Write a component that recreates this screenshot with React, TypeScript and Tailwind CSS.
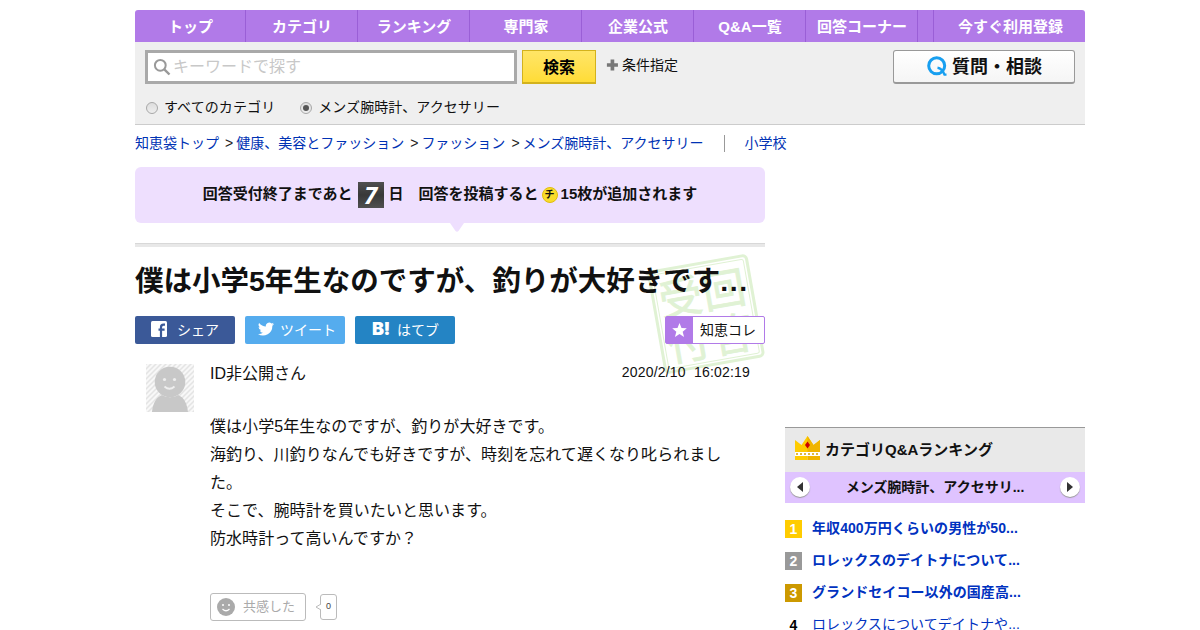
import React from "react";

const navItems = ["トップ", "カテゴリ", "ランキング", "専門家", "企業公式", "Q&A一覧", "回答コーナー"];

const crumbs = ["知恵袋トップ", "健康、美容とファッション", "ファッション", "メンズ腕時計、アクセサリー"];

const ranking = [
  { n: 1, title: "年収400万円くらいの男性が50...", badge: "bg-[#fc0] text-white", text: "font-bold" },
  { n: 2, title: "ロレックスのデイトナについて...", badge: "bg-[#999] text-white", text: "font-bold" },
  { n: 3, title: "グランドセイコー以外の国産高...", badge: "bg-[#c90] text-white", text: "font-bold" },
  { n: 4, title: "ロレックスについてデイトナや...", badge: "text-black", text: "" },
];

function Header() {
  return (
    <header>
      <nav className="flex h-8 rounded-t-[3px] bg-[#b17ae8] text-[15px] leading-[33px] font-bold text-white">
        {navItems.map((t, i) => (
          <div key={t} className={`${i === 0 ? "w-[111px]" : "w-28"} border-r border-[#9a5fd6] pl-px text-center`}>
            {t}
          </div>
        ))}
        <div className="w-[16px] border-r border-[#9a5fd6]" />
        <div className="flex-1 pl-[2px] text-center">今すぐ利用登録</div>
      </nav>
      <div className="h-[83px] border-b border-[#ccc] bg-[#efefef] px-[10px] pt-2">
        <div className="flex">
          <div className="flex h-[34px] w-[372px] items-center border-3 border-[#a9a9a9] bg-white pl-[5px] text-base leading-none text-[#c8c8c8]">
            <svg width="18" height="18" viewBox="0 0 18 18" fill="none" stroke="#999" className="mr-[2px]">
              <circle cx="7.3" cy="7.3" r="5.4" strokeWidth="2" />
              <path d="M11.3 11.3L16.5 16.5" strokeWidth="2.4" />
            </svg>
            キーワードで探す
          </div>
          <div className="ml-[5px] h-[34px] w-[74px] border border-b-2 border-[#d3b21c] bg-linear-to-b from-[#ffe566] to-[#ffdc35] text-center text-base leading-[33px] font-bold text-black">
            検索
          </div>
          <div className="ml-[10px] flex h-[30px] items-center text-sm">
            <svg width="12" height="12" viewBox="0 0 12 12" className="mr-[4px]">
              <path d="M4 0h4v4h4v4H8v4H4V8H0V4h4z" fill="#777" transform="translate(.9 .5) scale(.92)" />
            </svg>
            条件指定
          </div>
          <div className="ml-auto flex h-[34px] w-[182px] items-center justify-center rounded-[3px] border border-b-2 border-[#999] bg-linear-to-b from-white to-[#f5f5f5] pl-px text-lg leading-none font-bold">
            <svg width="20" height="20" viewBox="0 0 20 20" fill="none" stroke="#189ff0" className="mr-[5px] -mt-px">
              <circle cx="9.7" cy="9.8" r="8" strokeWidth="3" />
              <path d="M10.5 11.8C14 12.3 16 15 17.500 18.6H19.500" strokeWidth="2.4" />
            </svg>
            質問・相談
          </div>
        </div>
        <div className="mt-[13px] flex text-sm leading-5">
          <div className="flex items-center">
            <Radio />
            <span className="tracking-[0.1px]">すべてのカテゴリ</span>
          </div>
          <div className="ml-6 flex items-center">
            <Radio checked />
            <span className="tracking-[0.05px]">メンズ腕時計、アクセサリー</span>
          </div>
        </div>
      </div>
    </header>
  );
}

function Radio({ checked = false }: { checked?: boolean }) {
  return (
    <span className="mt-px mr-[6px] ml-px flex size-3 items-center justify-center rounded-full border border-[#a8a8a8] bg-linear-to-b from-[#ddd] to-[#eee]">
      {checked && <span className="size-1.5 rounded-full bg-[#555]" />}
    </span>
  );
}

function Breadcrumbs() {
  return (
    <div className="flex h-[42px] items-start pt-2 text-sm leading-5 text-[#0032b4]">
      {crumbs.map((c, i) => (
        <React.Fragment key={c}>
          {i > 0 && <span className="mr-[3px] ml-[6px] text-[#222]">&gt;</span>}
          <span>{c}</span>
        </React.Fragment>
      ))}
      <span className="mt-[2px] ml-5 h-[17px] w-px bg-[#999]" />
      <span className="ml-5">小学校</span>
    </div>
  );
}

function Banner() {
  return (
    <div className="relative flex h-14 items-center justify-center rounded-md bg-[#eedffe] text-[15px] leading-none font-bold whitespace-nowrap">
      <span className="-mt-[3px]">回答受付終了まであと</span>
      <span className="mr-[5px] ml-[5px] flex h-[26px] w-[26px] items-center justify-center bg-linear-to-b from-[#505050] via-[#383838] via-50% to-[#505050] font-['Noto_Sans'] text-[24px] text-white italic">
        7
      </span>
      <span className="-mt-[3px]">日　回答を投稿すると</span>
      <span className="mr-[3px] ml-[3px] flex size-4 items-center justify-center rounded-full border border-[#e0bd10] bg-[#f9dc2c] text-[10px]">
        チ
      </span>
      <span className="-mt-[3px]">15枚が追加されます</span>
      <svg width="14" height="9" className="absolute top-14 left-[315px]">
        <path d="M0 0H14L8.5 8Q7 9.5 5.5 8Z" fill="#eedffe" />
      </svg>
    </div>
  );
}

function Stamp() {
  return (
    <svg width="130" height="130" viewBox="0 0 130 130" className="absolute -top-[67px] -right-[6px] -z-10" fill="none" stroke="#e0f2d4">
      <g transform="translate(65 65) rotate(-10)">
        <rect x="-49.500" y="-51" width="99" height="102" rx="4" strokeWidth="3" />
        <rect x="-46" y="-47.500" width="92" height="95" rx="2" strokeWidth="1" />
        <g strokeWidth="0.800" fill="#e0f2d4" fontSize="43" textAnchor="middle">
          <text x="-22" y="-5">受</text>
          <text x="22" y="-5">回</text>
          <text x="-22" y="41">付</text>
          <text x="22" y="41">答</text>
        </g>
      </g>
    </svg>
  );
}

function ShareRow() {
  return (
    <div className="flex h-7 gap-[10px] text-sm leading-7 text-white">
      <div className="flex w-[100px] items-center rounded-xs bg-[#3b5998] pl-4">
        <svg width="16" height="16" viewBox="0 0 16 16" className="mr-[10px] -mt-[2px]">
          <rect width="16" height="16" rx="1.500" fill="#fff" />
          <path d="M10 16V6.300C10 4.500 10.800 3.700 12.500 3.700H14M7.500 8.700H13.600" fill="none" stroke="#3b5998" strokeWidth="2.200" />
        </svg>
        シェア
      </div>
      <div className="flex w-[100px] items-center rounded-xs bg-[#55acee] pl-[13px]">
        <svg width="16" height="16" viewBox="0 0 24 24" fill="#fff" className="mr-[6px] -mt-[3px]">
          <path d="M24 4.600a10 10 0 0 1-2.800.8 5 5 0 0 0 2.200-2.700 10 10 0 0 1-3.100 1.200 4.900 4.900 0 0 0-8.400 4.500A14 14 0 0 1 1.700 3.100a4.900 4.900 0 0 0 1.500 6.600 4.900 4.900 0 0 1-2.200-.6 4.900 4.900 0 0 0 3.900 4.900 5 5 0 0 1-2.200.1 4.900 4.900 0 0 0 4.600 3.400A10 10 0 0 1 0 19.500a14 14 0 0 0 21.500-12.400A10 10 0 0 0 24 4.600z" />
        </svg>
        ツイート
      </div>
      <div className="flex w-[100px] items-center rounded-xs bg-[#2484c4] pl-[17px]">
        <span className="mr-[7px] w-[18px] pb-[2px] font-['Inter'] text-[18px] leading-none font-black tracking-[-0.5px]">B!</span>
        はてブ
      </div>
      <div className="ml-auto flex w-[100px] rounded-xs border border-[#b17ae8] bg-white leading-[26px] text-[#111]">
        <span className="flex w-[27px] items-center justify-center bg-[#b17ae8]">
          <svg width="15" height="14" viewBox="0 0 24 23" fill="#fff">
            <path d="M12 0l3.300 8.300L24 8.800l-6.800 5.500L19.500 23 12 18.100 4.500 23l2.300-8.700L0 8.800l8.700-.5z" />
          </svg>
        </span>
        <span className="pl-[7px]">知恵コレ</span>
      </div>
    </div>
  );
}

function Avatar() {
  return (
    <svg width="48" height="48" viewBox="0 0 48 48" className="ml-[11px]">
      <defs>
        <pattern id="stripes" width="5" height="5" patternUnits="userSpaceOnUse">
          <rect width="5" height="5" fill="#f8f8f8" />
          <path d="M-1 6L6 -1M-1 1L1 -1M4 6L6 4" stroke="#e4e4e4" strokeWidth="1.500" />
        </pattern>
      </defs>
      <rect width="48" height="48" fill="url(#stripes)" />
      <path d="M6 48C7 38 11 33 16 31C21 34 27 34 32 31C37 33 41 38 42 48Z" fill="#c8c8c8" />
      <circle cx="24" cy="18" r="15.300" fill="#c8c8c8" />
      <circle cx="18.500" cy="15.500" r="1.600" fill="#eee" />
      <circle cx="28.500" cy="15.500" r="1.600" fill="#eee" />
      <path d="M18.500 22.500Q23.500 27 28.500 22.500" fill="none" stroke="#eee" strokeWidth="1.800" />
    </svg>
  );
}

function Question() {
  return (
    <main className="isolate w-[630px]">
      <Banner />
      <div className="mt-5 h-1 border-t border-[#d8d8d8] bg-[#e8e8e8]" />
      <h1 className="mt-[14px] h-[55px] text-[28.5px] leading-10 font-bold whitespace-nowrap">
        僕は小学5年生なのですが、釣りが大好きです<span className="tracking-[1.5px]">...</span>
      </h1>
      <div className="relative">
        <Stamp />
        <ShareRow />
        <div className="mt-5 flex">
          <Avatar />
          <div className="ml-4 w-[540px]">
            <div className="flex h-[49px] justify-between">
              <span className="text-base leading-5">ID非公開さん</span>
              <span className="text-sm leading-[17px] tracking-[0.19px] whitespace-pre">2020/2/10  16:02:19</span>
            </div>
            <p className="text-base leading-7 tracking-[0.05px]">
              僕は小学5年生なのですが、釣りが大好きです。
              <br />
              海釣り、川釣りなんでも好きですが、時刻を忘れて遅くなり叱られまし
              <br />
              た。
              <br />
              そこで、腕時計を買いたいと思います。
              <br />
              防水時計って高いんですか？
            </p>
            <div className="mt-10 flex items-center">
              <div className="flex h-7 w-24 items-center rounded-[3px] border border-[#bbb] pl-[6px] text-[13px] text-[#aaa]">
                <svg width="18" height="18" viewBox="0 0 18 18" className="mr-2">
                  <circle cx="9" cy="9" r="9" fill="#aaa" />
                  <circle cx="6" cy="7" r="1" fill="#fff" />
                  <circle cx="12" cy="7" r="1" fill="#fff" />
                  <path d="M5.500 11Q9 14.500 12.500 11" fill="none" stroke="#fff" strokeWidth="1.200" />
                </svg>
                共感した
              </div>
              <svg width="6" height="8" className="z-10 ml-[9px] -mr-px" fill="white" stroke="#bbb">
                <path d="M6 1L1 4L6 7" />
              </svg>
              <div className="flex h-[26px] w-[17px] items-center justify-center rounded-[3px] border border-[#bbb] text-[9px] text-[#444]">0</div>
            </div>
          </div>
        </div>
      </div>
    </main>
  );
}

function Arrow({ flip = false }: { flip?: boolean }) {
  return (
    <span className="flex size-5 items-center justify-center rounded-full bg-white shadow-[0_1px_1px_#999]">
      <svg width="6" height="10" viewBox="0 0 6 10">
        <path d={flip ? "M0 0L6 5L0 10Z" : "M6 0L0 5L6 10Z"} fill="#333" />
      </svg>
    </span>
  );
}

function Sidebar() {
  return (
    <aside className="mt-[260px] w-[300px]">
      <div className="flex h-[45px] items-center border-t border-[#999] bg-[#e9e9e9] pl-[10px] text-[15px] font-bold">
        <svg width="25" height="24" viewBox="0 0 25 24" className="mr-[5px] -mt-1">
          <path d="M0 4L6.500 9L12.500 0L18.500 9L25 4V16H0Z" fill="#fc0" />
          <path d="M12.500 0L18.500 9L25 4V16H12.500Z" fill="#f0b400" />
          <path d="M12.500 5.500L15 9L12.500 12.500L10 9Z" fill="#c00" />
          <path d="M0 16H25V20H0Z" fill="#fff" />
          <path d="M1 18H24" stroke="#d6a300" strokeWidth="1.500" strokeDasharray="2 2" />
          <path d="M0 20H12.500V24H0Z" fill="#fc0" />
          <path d="M12.500 20H25V24H12.500Z" fill="#f0b400" />
        </svg>
        カテゴリQ&amp;Aランキング
      </div>
      <div className="flex h-[31px] items-center justify-between bg-[#dfc3ff] px-[5px] pb-px text-sm font-bold">
        <Arrow />
        <span className="pb-px">メンズ腕時計、アクセサリ...</span>
        <Arrow flip />
      </div>
      <ol className="mt-[9px]">
        {ranking.map((r) => (
          <li key={r.n} className="flex h-8 items-center text-sm text-[#0032c0]">
            <span className={`mt-px h-[18px] w-[17px] text-center text-[14px] leading-[19px] font-bold ${r.badge}`}>{r.n}</span>
            <span className={`ml-[10px] tracking-[0.07px] ${r.text}`}>{r.title}</span>
          </li>
        ))}
      </ol>
    </aside>
  );
}

export default function App() {
  return (
    <div className="h-[630px] overflow-hidden bg-white pt-[10px] font-['Liberation_Sans','Noto_Sans_CJK_JP',sans-serif] text-[#111]">
      <div className="ml-[135px] w-[950px]">
        <Header />
        <Breadcrumbs />
        <div className="flex justify-between">
          <Question />
          <Sidebar />
        </div>
      </div>
    </div>
  );
}
